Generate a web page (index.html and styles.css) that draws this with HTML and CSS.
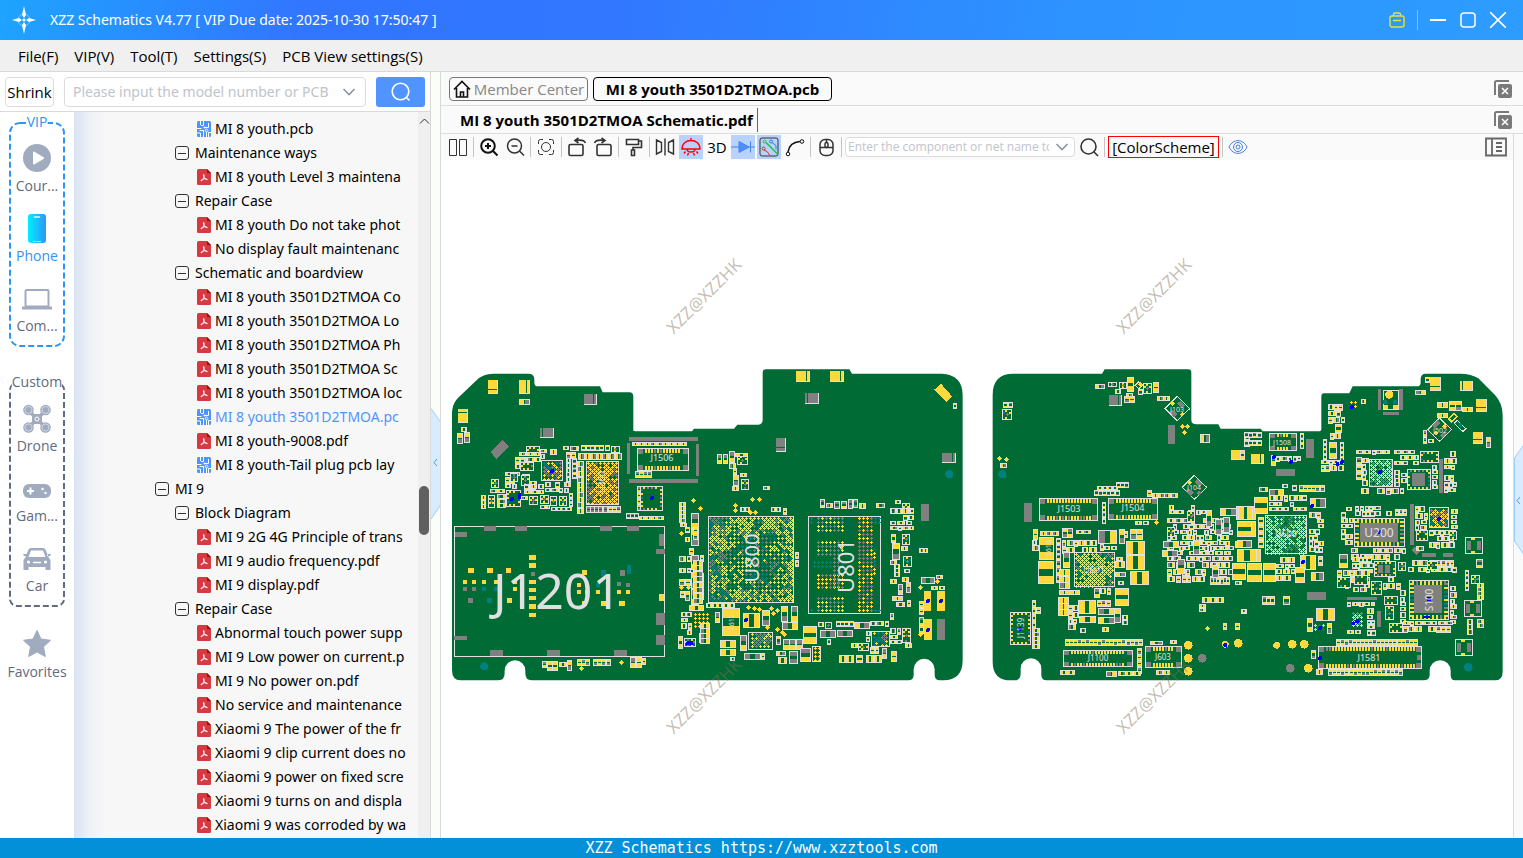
FILE: index.html
```
<!DOCTYPE html>
<html lang="en">
<head>
  <meta charset="UTF-8">
  <meta name="viewport" content="width=device-width, initial-scale=1.0">
  <title>XZZ Schematics V4.77</title>
  <link rel="stylesheet" href="styles.css">
</head>
<body>
<svg class="symbols" aria-hidden="true">
  <symbol id="pdf" viewBox="0 0 14 16">
    <path d="M1.500 0H10l4 4v10.500a1.500 1.500 0 0 1-1.500 1.500h-11A1.500 1.500 0 0 1 0 14.500v-13A1.500 1.500 0 0 1 1.500 0z" fill="#d33a42"/>
    <path d="M10 0l4 4h-3a1 1 0 0 1-1-1z" fill="#8e1218"/>
    <path d="M6.600 5.500c.8 0 .6 1.500.4 2.700C6.600 9.800 4.800 12.300 4 12c-.7-.6 1.500-2 3.300-2.200 1.300-.2 3 0 3 .6 0 .7-1.500.2-2.600-.8C6.900 8.500 6.100 6.500 6.600 5.500z" fill="none" stroke="#fff" stroke-width=".9"/>
  </symbol>
  <symbol id="pcb" viewBox="0 0 14 16">
    <rect width="14" height="16" rx="1.500" fill="#4f93ff"/>
    <path d="M3.500 0v4M6.500 0v4.500H4M11.500 2v4.500H8M0 7.500h4.500M6.500 16V9.500H2.500M3.500 16v-4H0M9.500 16v-5M11.500 16v-4.500H14" fill="none" stroke="#fff"/>
    <circle cx="7.500" cy="6.500" r="1" fill="#fff"/>
    <circle cx="9.500" cy="9.500" r="1.400" fill="none" stroke="#fff"/>
  </symbol>
  <symbol id="chevron" viewBox="0 0 14 10">
    <path d="M1.500 2L7 7.500 12.500 2" fill="none" stroke="#8e949e" stroke-width="1.600"/>
  </symbol>
  <symbol id="close-all" viewBox="0 0 18 18">
    <path d="M1 15V2.500A1.500 1.500 0 0 1 2.500 1H15" fill="none" stroke="#7a7a7a" stroke-width="2"/>
    <rect x="4" y="4" width="14" height="14" rx="2" fill="#7a7a7a"/>
    <path d="M8 8l6 6M14 8l-6 6" stroke="#fff" stroke-width="1.600"/>
  </symbol>
</svg>

<header class="titlebar">
  <svg class="logo" width="24" height="30" viewBox="0 0 24 30">
    <circle cx="12" cy="15" r="6" fill="none" stroke="#7cc4ff"/>
    <path d="M12 1l2 9-2 3-2-3zM12 29l2-9-2-3-2 3zM0 15l7-2 3 2-3 2zM24 15l-7-2-3 2 3 2z" fill="#fff"/>
    <circle cx="12" cy="15" r="1.500" fill="#fff"/>
  </svg>
  <span class="title">XZZ Schematics V4.77 [ VIP Due date: 2025-10-30 17:50:47 ]</span>
  <div class="window-buttons">
    <button aria-label="Toolbox"><svg width="16" height="16" viewBox="0 0 16 16" fill="none" stroke="#e3e23c" stroke-width="1.400"><rect x="1" y="4" width="14" height="11" rx="2"/><path d="M4.500 4V2.500a1.500 1.500 0 0 1 1.500-1.500h4a1.500 1.500 0 0 1 1.500 1.500V4M4 8.500h8"/></svg></button>
    <span class="divider"></span>
    <button aria-label="Minimize"><svg width="16" height="16" viewBox="0 0 16 16"><path d="M0 8h16" stroke="#fff" stroke-width="2"/></svg></button>
    <button aria-label="Maximize"><svg width="16" height="16" viewBox="0 0 16 16"><rect x="1" y="1" width="14" height="14" rx="3" fill="none" stroke="#fff" stroke-width="1.500"/></svg></button>
    <button aria-label="Close"><svg width="16" height="16" viewBox="0 0 16 16"><path d="M0 0l16 16M16 0L0 16" stroke="#fff" stroke-width="1.600"/></svg></button>
  </div>
</header>

<nav class="menubar">
  <button>File(F)</button>
  <button>VIP(V)</button>
  <button>Tool(T)</button>
  <button>Settings(S)</button>
  <button>PCB View settings(S)</button>
</nav>

<main class="main">
  <section class="left">
    <form class="search">
      <button type="button" class="shrink">Shrink</button>
      <div class="combo">
        <input type="text" aria-label="Model number" placeholder="Please input the model number or PCB">
        <svg width="14" height="10"><use href="#chevron"/></svg>
      </div>
      <button type="button" class="go" aria-label="Search"><svg width="20" height="20" viewBox="0 0 20 20" fill="none" stroke="#fff" stroke-width="1.600"><circle cx="9.500" cy="9.500" r="8.300"/><path d="M15.500 15.500l3 3"/></svg></button>
    </form>
    <div class="left-body">
      <aside class="sidebar">
        <div class="group vip">
          <svg class="frame"><rect x="1" y="1" rx="10"/></svg>
          <span class="group-name">VIP</span>
          <a href="#" class="item">
            <svg width="30" height="30" viewBox="0 0 30 30"><circle cx="15" cy="15" r="14" fill="#a1abc0"/><path d="M11 9.500v11a1 1 0 0 0 1.500.8l9-5.300a1 1 0 0 0 0-1.800l-9-5.500a1 1 0 0 0-1.500.8z" fill="#fff"/></svg>
            Cour...
          </a>
          <a href="#" class="item on">
            <svg width="30" height="30" viewBox="0 0 30 30"><defs><linearGradient id="ph"><stop offset="0" stop-color="#00f0ff"/><stop offset="1" stop-color="#2f94f8"/></linearGradient></defs><rect x="6" y="1" width="18" height="29" rx="3" fill="url(#ph)"/><path d="M12.500 4h5" stroke="#dff6ff" stroke-width="1.500" stroke-linecap="round"/><path d="M11 28.500h8" stroke="#9fdcff"/></svg>
            Phone
          </a>
          <a href="#" class="item">
            <svg width="30" height="30" viewBox="0 0 30 30" fill="none" stroke="#a1abc0"><rect x="3.500" y="7" width="23" height="16.500" rx="1" stroke-width="2"/><path d="M0 25h30" stroke-width="3"/></svg>
            Com...
          </a>
        </div>
        <div class="group custom">
          <svg class="frame"><rect x="1" y="1" rx="7"/></svg>
          <span class="group-name">Custom</span>
          <a href="#" class="item">
            <svg width="30" height="30" viewBox="0 0 30 30"><path d="M6 7l18 18M24 7L6 25" stroke="#a1abc0" stroke-width="3.500"/><g fill="#a1abc0"><circle cx="6.500" cy="7" r="5.300"/><circle cx="23.500" cy="7" r="5.300"/><circle cx="6.500" cy="24.500" r="5.300"/><circle cx="23.500" cy="24.500" r="5.300"/><rect x="10" y="11" width="10" height="10" rx="3"/></g><g fill="none" stroke="#fff" stroke-width=".5"><circle cx="6.500" cy="7" r="3.600"/><circle cx="23.500" cy="7" r="3.600"/><circle cx="6.500" cy="24.500" r="3.600"/><circle cx="23.500" cy="24.500" r="3.600"/><circle cx="15" cy="16" r="2" stroke-width="1"/></g></svg>
            Drone
          </a>
          <a href="#" class="item">
            <svg width="30" height="30" viewBox="0 0 30 30"><rect x="1" y="11" width="28" height="14" rx="6" fill="#a1abc0"/><path d="M5 18h7M8.500 14.500v7" stroke="#fff" stroke-width="2"/><circle cx="20.500" cy="16" r="1.200" fill="#fff"/><circle cx="23.500" cy="20" r="1.200" fill="#fff"/></svg>
            Gam...
          </a>
          <a href="#" class="item">
            <svg width="30" height="30" viewBox="0 0 30 30"><path d="M3 15l3.500-8.500A3 3 0 0 1 9 5h12a3 3 0 0 1 2.500 1.500L27 15l1.500 2v10h-5v-3h-17v3h-5V17zM1 11h4v2H2zM29 11h-4v2h3z" fill="#a1abc0"/><path d="M6.500 14L9 7.500h12l2.500 6.500z" fill="#fff"/><circle cx="6.500" cy="19" r="1.600" fill="#fff"/><circle cx="23.500" cy="19" r="1.600" fill="#fff"/><path d="M11 19.500h8" stroke="#fff" stroke-width="1.500"/></svg>
            Car
          </a>
        </div>
        <a href="#" class="item favorites">
          <svg width="30" height="30" viewBox="0 0 30 30"><path d="M15 1.500l4 8.500 9.500 1.300-7 6.500 1.800 9.700L15 23l-8.300 4.500 1.800-9.700-7-6.500L11 10z" fill="#a1abc0" stroke="#a1abc0" stroke-linejoin="round"/></svg>
          Favorites
        </a>
      </aside>
      <ul class="tree">
        <li class="file"><a href="#"><svg><use href="#pcb"/></svg>MI 8 youth.pcb</a></li>
        <li class="folder"><button aria-label="Collapse"></button>Maintenance ways</li>
        <li class="file"><a href="#"><svg><use href="#pdf"/></svg>MI 8 youth Level 3 maintena</a></li>
        <li class="folder"><button aria-label="Collapse"></button>Repair Case</li>
        <li class="file"><a href="#"><svg><use href="#pdf"/></svg>MI 8 youth Do not take phot</a></li>
        <li class="file"><a href="#"><svg><use href="#pdf"/></svg>No display fault maintenanc</a></li>
        <li class="folder"><button aria-label="Collapse"></button>Schematic and boardview</li>
        <li class="file"><a href="#"><svg><use href="#pdf"/></svg>MI 8 youth 3501D2TMOA Co</a></li>
        <li class="file"><a href="#"><svg><use href="#pdf"/></svg>MI 8 youth 3501D2TMOA Lo</a></li>
        <li class="file"><a href="#"><svg><use href="#pdf"/></svg>MI 8 youth 3501D2TMOA Ph</a></li>
        <li class="file"><a href="#"><svg><use href="#pdf"/></svg>MI 8 youth 3501D2TMOA Sc</a></li>
        <li class="file"><a href="#"><svg><use href="#pdf"/></svg>MI 8 youth 3501D2TMOA loc</a></li>
        <li class="file current"><a href="#"><svg><use href="#pcb"/></svg>MI 8 youth 3501D2TMOA.pc</a></li>
        <li class="file"><a href="#"><svg><use href="#pdf"/></svg>MI 8 youth-9008.pdf</a></li>
        <li class="file"><a href="#"><svg><use href="#pcb"/></svg>MI 8 youth-Tail plug pcb lay</a></li>
        <li class="model"><button aria-label="Collapse"></button>MI 9</li>
        <li class="folder"><button aria-label="Collapse"></button>Block Diagram</li>
        <li class="file"><a href="#"><svg><use href="#pdf"/></svg>MI 9 2G 4G Principle of trans</a></li>
        <li class="file"><a href="#"><svg><use href="#pdf"/></svg>MI 9 audio frequency.pdf</a></li>
        <li class="file"><a href="#"><svg><use href="#pdf"/></svg>MI 9 display.pdf</a></li>
        <li class="folder"><button aria-label="Collapse"></button>Repair Case</li>
        <li class="file"><a href="#"><svg><use href="#pdf"/></svg>Abnormal touch power supp</a></li>
        <li class="file"><a href="#"><svg><use href="#pdf"/></svg>MI 9 Low power on current.p</a></li>
        <li class="file"><a href="#"><svg><use href="#pdf"/></svg>MI 9 No power on.pdf</a></li>
        <li class="file"><a href="#"><svg><use href="#pdf"/></svg>No service and maintenance</a></li>
        <li class="file"><a href="#"><svg><use href="#pdf"/></svg>Xiaomi 9 The power of the fr</a></li>
        <li class="file"><a href="#"><svg><use href="#pdf"/></svg>Xiaomi 9 clip current does no</a></li>
        <li class="file"><a href="#"><svg><use href="#pdf"/></svg>Xiaomi 9 power on fixed scre</a></li>
        <li class="file"><a href="#"><svg><use href="#pdf"/></svg>Xiaomi 9 turns on and displa</a></li>
        <li class="file"><a href="#"><svg><use href="#pdf"/></svg>Xiaomi 9 was corroded by wa</a></li>
      </ul>
      <div class="scrollbar">
        <svg width="12" height="18" viewBox="0 0 12 18"><path d="M2 11.500l4.500-4.500 4.500 4.500" fill="none" stroke="#333"/></svg>
        <span class="thumb"></span>
      </div>
    </div>
  </section>

  <div class="splitter">
    <svg width="10" height="112" viewBox="0 0 10 112"><path d="M0 .5L9.500 14v83L0 111" fill="#d8ebff" stroke="#9bd0fb"/><path d="M6 51l-3 3.500 3 3.500" fill="none" stroke="#4d9ae8"/></svg>
  </div>

  <section class="right">
    <div class="tabs">
      <button class="tab member"><svg width="18" height="18" viewBox="0 0 18 18" fill="none" stroke="#111" stroke-width="1.600"><path d="M1 9.500L9 1.500l8 8M3.500 8v9h11V8M7.500 17v-5h3v5"/></svg>Member Center</button>
      <button class="tab active">MI 8 youth 3501D2TMOA.pcb</button>
      <button class="close-all" aria-label="Close all"><svg width="18" height="18"><use href="#close-all"/></svg></button>
    </div>
    <div class="tabs docs">
      <button class="doc">MI 8 youth 3501D2TMOA Schematic.pdf</button>
      <button class="close-all" aria-label="Close all"><svg width="18" height="18"><use href="#close-all"/></svg></button>
    </div>
    <div class="work">
      <div class="view">
        <div class="toolbar">
          <button aria-label="Split"><svg viewBox="0 0 20 20"><path d="M1.500 2.500h7v16h-7zM11.500 2.500h7v16h-7z"/></svg></button>
          <span class="sep"></span>
          <button aria-label="Zoom in"><svg viewBox="0 0 20 20" stroke="#111" stroke-width="2"><circle cx="9" cy="9" r="6.800"/><path d="M14 14l4.500 4.500M6 9h6M9 6v6"/></svg></button>
          <button aria-label="Zoom out"><svg viewBox="0 0 20 20" stroke-width="1.500"><circle cx="9.500" cy="9" r="7"/><path d="M14.500 14l4.500 4.500M6.500 9h6"/></svg></button>
          <span class="sep"></span>
          <button aria-label="Fit"><svg viewBox="0 0 20 20"><path d="M2.500 7V4.500a2 2 0 0 1 2-2H7M13 2.500h2.500a2 2 0 0 1 2 2V7M17.500 13v2.500a2 2 0 0 1-2 2H13M7 17.500H4.500a2 2 0 0 1-2-2V13"/><circle cx="10" cy="10" r="4.500"/></svg></button>
          <span class="sep"></span>
          <button aria-label="Rotate left"><svg viewBox="0 0 20 20" stroke-width="1.600"><rect x="2" y="7.500" width="14" height="11" rx="1.500"/><path d="M18.500 6c-1-2.500-4-3.500-10-2.500M11.500 1L8 3.500 11.500 6"/></svg></button>
          <button aria-label="Rotate right"><svg viewBox="0 0 20 20" stroke-width="1.600"><rect x="4" y="7.500" width="14" height="11" rx="1.500"/><path d="M1.500 6c1-2.500 4-3.500 10-2.500M8.500 1L12 3.500 8.500 6"/></svg></button>
          <span class="sep"></span>
          <button aria-label="Format"><svg viewBox="0 0 20 20" stroke-width="1.600"><path d="M2.500 2.500h12v5h-12zM14.500 4h3v6.500H9v2.500M7.500 13h3v5.500h-3z"/></svg></button>
          <span class="sep"></span>
          <button aria-label="Mirror"><svg viewBox="0 0 20 20" stroke-width="1.400"><path d="M1.500 3l5 2.500v9L1.500 17zM18.500 3l-5 2.500v9l5 2.500zM10 1.500v17"/></svg></button>
          <button class="on" aria-label="Light"><svg viewBox="0 0 20 20" stroke="#f00" stroke-width="1.400"><path d="M1 12C1 6.500 5 3.500 10 3.500s9 3 9 8.500zM10 1v2.500M6 12c0 4 8 4 8 0M4.500 14.500L3 16.500M15.500 14.500l1.500 2M7.500 16L6.500 18.500M12.500 16l1 2.500"/></svg></button>
          <button class="text">3D</button>
          <button class="on" aria-label="Diode"><svg class="wide" viewBox="0 0 24 20" stroke="#4385f5"><path d="M0 10h24M19.500 4.500v11"/><path d="M8 4.500v11l10-5.500z" fill="#4a90ff"/></svg></button>
          <button class="on" aria-label="Net lines"><svg viewBox="0 0 20 20"><rect x="1" y="1" width="18" height="18" rx="2" stroke="#333"/><path d="M7 5.500L19 17.500" stroke="#1fc43c" stroke-width="1.600"/><circle cx="5.500" cy="4.500" r="1.500" stroke="#1fc43c"/><path d="M13 5.500l4 3v4" stroke="#2f7de8"/><circle cx="12" cy="4.500" r="1.500" stroke="#2f7de8"/><path d="M5 13l3 1.500 3 4" stroke="#e22"/><circle cx="4.500" cy="11.500" r="1.500" stroke="#e22"/></svg></button>
          <button aria-label="Curve"><svg viewBox="0 0 20 20" stroke="#111"><path d="M3 15C4 8 8 5 15 4.500" stroke-width="1.600"/><circle cx="3" cy="17" r="1.800"/><circle cx="17" cy="4.500" r="1.800"/></svg></button>
          <span class="sep"></span>
          <button aria-label="Mouse"><svg viewBox="0 0 20 20" stroke-width="1.500"><rect x="4" y="2.500" width="13" height="16" rx="5"/><path d="M4 10.500h13M10.500 2.500v3"/><rect x="9" y="5.500" width="3" height="5" rx="1.500"/></svg></button>
          <span class="sep"></span>
          <div class="combo small">
            <input type="text" aria-label="Component or net name" placeholder="Enter the component or net name to search">
            <svg width="14" height="10"><use href="#chevron"/></svg>
          </div>
          <button aria-label="Find"><svg viewBox="0 0 20 20" stroke-width="1.600"><circle cx="9.500" cy="9.500" r="7.500"/><path d="M15 15l4 4"/></svg></button>
          <span class="sep"></span>
          <button class="scheme">[ColorScheme]</button>
          <span class="sep"></span>
          <button aria-label="Show"><svg viewBox="0 0 20 20" stroke="#3f7fe0"><path d="M1 10c4-8.500 14-8.500 18 0-4 8.500-14 8.500-18 0z"/><circle cx="10" cy="10" r="4.500"/><circle cx="10" cy="10" r="2"/></svg></button>
          <button class="panel" aria-label="Panel"><svg class="wide" viewBox="0 0 24 20" stroke="#666" stroke-width="1.800"><path d="M2 1.500h20v17H2zM8 1.500v17M12 6h6M12 10h6M12 14h6"/></svg></button>
        </div>
        <svg id="board" class="board" viewBox="441 160 1072 678" preserveAspectRatio="xMidYMid slice"></svg>
      </div>
      <div class="edge">
        <svg width="10" height="112" viewBox="0 0 10 112"><path d="M10 .5L.5 14v83L10 111" fill="#d8ebff" stroke="#9bd0fb"/><path d="M6 53l-3 3.500 3 3.500" fill="none" stroke="#4d9ae8"/></svg>
      </div>
    </div>
  </section>
</main>

<footer class="footer">XZZ Schematics https://www.xzztools.com</footer>
<script src="board.js"></script>
</body>
</html>
```
FILE: styles.css
```
* {
  box-sizing: border-box;
}
html, body {
  margin: 0;
  height: 100%;
}
body {
  display: flex;
  flex-direction: column;
  overflow: hidden;
  font-family: "Open Sans", "Noto Sans", sans-serif;
  font-size: 15px;
  line-height: 20px;
  color: #000;
  background: #fff;
}
button, input {
  font: inherit;
  color: inherit;
}
button {
  padding: 0;
  border: none;
  background: none;
  white-space: nowrap;
}
a {
  color: inherit;
  text-decoration: none;
}
svg {
  flex: none;
}
.symbols {
  position: absolute;
  width: 0;
  height: 0;
}

/* title and menu */
.titlebar {
  display: flex;
  align-items: center;
  height: 40px;
  flex: none;
  padding: 0 17px 0 12px;
  color: #fff;
  background: linear-gradient(100deg, #1ea4ff 0, #3275ff 20%, #3177ff 40%, #2d93ff 70%, #2d9cff);
}
.title, .tree, .search input {
  font-family: "Noto Sans", sans-serif;
  font-size: 14px;
}
.logo {
  margin-right: 14px;
}
.window-buttons {
  display: flex;
  align-items: center;
  gap: 14px;
  margin-left: auto;
}
.window-buttons svg {
  display: block;
}
.divider {
  width: 1px;
  height: 20px;
  margin: 0 -2px;
  background: #7fc0ff;
}
.menubar {
  display: flex;
  gap: 16px;
  height: 32px;
  flex: none;
  padding: 0 18px;
  background: #f0f0f0;
  border-bottom: 1px solid #d9d9d9;
}
.main {
  display: flex;
  flex: 1;
  min-height: 0;
}

/* left side */
.left {
  display: flex;
  flex-direction: column;
  width: 431px;
  flex: none;
  border-right: 1px solid #d9d9d9;
}
.search {
  display: flex;
  align-items: center;
  gap: 10px;
  height: 40px;
  flex: none;
  padding: 0 5px;
  border-bottom: 1px solid #d9d9d9;
}
.shrink {
  width: 49px;
  height: 30px;
  border: 1px solid #dcdcdc;
  border-radius: 4px;
}
.combo {
  display: flex;
  align-items: center;
  flex: 1;
  min-width: 0;
  height: 30px;
  padding: 0 9px 0 8px;
  border: 1px solid #dcdcdc;
  border-radius: 4px;
  background: #fff;
}
.combo input {
  flex: 1;
  min-width: 0;
  padding: 0;
  border: none;
  outline: none;
  background: none;
  margin-right: 6px;
}
.combo input::placeholder {
  color: #c0c4cc;
}
.go {
  display: flex;
  align-items: center;
  justify-content: center;
  width: 49px;
  height: 30px;
  border-radius: 3px;
  background: #5294ff;
}
.left-body {
  display: flex;
  flex: 1;
  min-height: 0;
}
.sidebar {
  width: 74px;
  flex: none;
  padding: 10px 9px 0;
  font-size: 14px;
  color: #5f6b7f;
}
.group {
  position: relative;
  display: flex;
  flex-direction: column;
  gap: 17px;
  height: 225px;
  padding-top: 21px;
  margin-bottom: 35px;
}
.custom {
  margin-bottom: 22px;
}
.frame {
  position: absolute;
  top: 0;
  left: 0;
  width: 100%;
  height: 100%;
}
.frame rect {
  width: calc(100% - 2px);
  height: calc(100% - 2px);
  fill: none;
  stroke: #5f6b7f;
  stroke-width: 2;
  stroke-dasharray: 6 3;
}
.vip .frame rect {
  stroke: #2f94f8;
}
.group-name {
  position: absolute;
  top: -10px;
  left: 50%;
  transform: translateX(-50%);
  background: #fff;
}
.vip .group-name, .item.on {
  color: #2f94f8;
}
.item {
  display: flex;
  flex-direction: column;
  align-items: center;
  gap: 3px;
}
.tree {
  flex: 1;
  min-width: 0;
  margin: 0;
  padding: 5px 8px 0 0;
  overflow: hidden;
  list-style: none;
  background: linear-gradient(90deg, #d9e3f2, #eef1f6 16px, #f7f7f7 32px);
}
.tree li {
  display: flex;
  align-items: center;
  height: 24px;
  white-space: nowrap;
}
.tree .file {
  padding-left: 123px;
}
.tree .folder {
  padding-left: 101px;
}
.tree .model {
  padding-left: 81px;
}
.tree a {
  display: flex;
  align-items: center;
}
.tree .current {
  color: #5294ff;
}
.tree svg {
  width: 14px;
  height: 16px;
  margin-right: 4px;
}
.tree button {
  width: 14px;
  height: 14px;
  margin-right: 6px;
  border: 1px solid #333;
  border-radius: 3px;
}
.tree button::after {
  content: "";
  display: block;
  height: 1px;
  margin: 0 2px;
  background: #333;
}
.scrollbar {
  width: 12px;
  flex: none;
  background: #efefef;
}
.scrollbar svg {
  display: block;
}
.thumb {
  display: block;
  width: 10px;
  height: 49px;
  margin: 356px 1px 0;
  border-radius: 5px;
  background: #606060;
}
.splitter {
  display: flex;
  align-items: center;
  width: 9px;
  flex: none;
  padding-top: 18px;
  background: #fbfdf9;
}

/* right side */
.right {
  display: flex;
  flex-direction: column;
  flex: 1;
  min-width: 0;
  border-left: 1px solid #d9d9d9;
}
.tabs {
  display: flex;
  align-items: center;
  gap: 5px;
  height: 34px;
  flex: none;
  padding: 0 11px 0 8px;
  background: #fafafa;
  border-bottom: 1px solid #dcdcdc;
}
.docs {
  height: 28px;
}
.tab {
  display: flex;
  align-items: center;
  justify-content: center;
  gap: 3px;
  width: 139px;
  height: 24px;
  border: 1px solid #777;
  border-radius: 4px;
  color: #888;
}
.tab.active {
  width: 239px;
  border-color: #000;
  color: #000;
  font-weight: bold;
}
.doc {
  width: 309px;
  height: 24px;
  padding-left: 11px;
  border-right: 1px solid #666;
  text-align: left;
  font-weight: bold;
}
.close-all {
  margin-left: auto;
}
.close-all svg {
  display: block;
}
.work {
  display: flex;
  flex: 1;
  min-height: 0;
}
.view {
  display: flex;
  flex-direction: column;
  flex: 1;
  min-width: 0;
}
.toolbar {
  display: flex;
  align-items: center;
  gap: 2px;
  height: 26px;
  flex: none;
  padding: 0 5px;
  background: #fafafa;
}
.toolbar button {
  display: flex;
  align-items: center;
  justify-content: center;
  width: 24px;
  height: 24px;
  flex: none;
}
.toolbar button svg {
  width: 20px;
  height: 20px;
  fill: none;
}
.toolbar button svg:not([stroke]) {
  stroke: #333;
}
.toolbar button .wide {
  width: 24px;
}
.toolbar .on {
  background: #b8d2fc;
}
.sep {
  width: 1px;
  height: 20px;
  margin: 0 1px;
  background: #c4c4c4;
}
.toolbar .scheme {
  width: 111px;
  height: 22px;
  border: 1px solid #f00;
}
.toolbar .panel {
  margin-left: auto;
}
.small {
  flex: none;
  width: 230px;
  height: 20px;
  padding: 0 5px 0 2px;
  font-size: 12px;
}
.board {
  display: block;
  flex: 1;
  min-height: 0;
  width: 100%;
  font-family: "Noto Sans", sans-serif;
}
.board .mark {
  font-size: 17px;
  fill: #80705a;
  fill-opacity: .45;
}
.edge {
  display: flex;
  align-items: center;
  width: 10px;
  flex: none;
  padding-top: 28px;
  background: #fafafa;
  border-left: 1px solid #dcdcdc;
}
.footer {
  height: 20px;
  flex: none;
  text-align: center;
  font-family: "DejaVu Sans Mono", monospace;
  font-size: 15px;
  color: #fff;
  background: #0390d8;
}
```
FILE: board.js
```
// Board drawing. Part coordinates are in board units, three to a pixel.
const colors = { y: '#ffd83d', g: '#808080', t: '#008080', w: '#e0e0e0', b: '#0000ff', n: '#006b35' };
let out = [];
let ox = 0, oy = 0;
let seed = 7;

function rnd() {
  seed = (seed * 16807) % 2147483647;
  return seed / 2147483647;
}
const pick = s => s[Math.floor(rnd() * s.length)];
const u = v => Math.round(v / 3);

function px(x, y, w, h, c) {
  out.push(`<rect x="${x}" y="${y}" width="${w}" height="${h}" fill="${colors[c]}"/>`);
}
function rect(x, y, w, h, c) {
  px(ox + u(x), oy + u(y), u(w), u(h), c);
}
function box(x, y, w, h) {
  out.push(`<rect x="${ox + u(x) + .5}" y="${oy + u(y) + .5}" width="${u(w) - 1}" height="${u(h) - 1}" fill="none" stroke="#e0e0e0"/>`);
}

// two-pad part with an outline
function cap(x, y, w, h, cc) {
  if (!cc) cc = pick(['yy', 'yy', 'yg', 'gy', 'yy']);
  const X = ox + u(x), Y = oy + u(y), W = Math.max(u(w), 4), H = Math.max(u(h), 4);
  px(X, Y, W, H, 'w');
  px(X + 1, Y + 1, W - 2, H - 2, 'n');
  const big = Math.max(W, H) > 10;
  if (W >= H) {
    const p = big ? Math.round(W * .32) : Math.max(1, Math.floor((W - 2) * .4));
    px(X + 1, Y + 1, p, H - 2, cc[0]);
    px(X + W - 1 - p, Y + 1, p, H - 2, cc[1]);
  } else {
    const p = big ? Math.round(H * .32) : Math.max(1, Math.floor((H - 2) * .4));
    px(X + 1, Y + 1, W - 2, p, cc[0]);
    px(X + 1, Y + H - 1 - p, W - 2, p, cc[1]);
  }
}

function strip(x, y, w, h, n, cc) {
  for (let i = 0; i < n; i++) {
    if (w > h) cap(x + i * w / n, y, w / n + 2, h, cc);
    else cap(x, y + i * h / n, w, h / n + 2, cc);
  }
}

// dense field of small parts
function field(x, y, w, h) {
  for (let j = y; j + 12 <= y + h; ) {
    const rh = pick([15, 18, 21]);
    for (let i = x; i + 12 <= x + w; ) {
      const cw = pick([12, 15, 18, 21, 24]);
      if (rnd() > .14) cap(i, j, Math.min(cw, x + w - i), rh - (cw > 16 ? 3 : 0));
      i += cw + pick([0, 0, 3]);
    }
    j += rh;
  }
}

function plus(X, Y, c) {
  px(X - 1, Y, 3, 1, c);
  px(X, Y - 1, 1, 3, c);
}
function grid(x, y, w, h, cs) {
  const X = ox + u(x), Y = oy + u(y), W = u(w), H = u(h);
  const large = W > 60;
  const wide = cs.length > 2;
  for (let j = 2; j < H; j += 4) for (let i = 2; i < W; i += 4) {
    const edge = Math.min(i, j, W - i, H - j) < 16;
    // ground and spare nets run in patches, the rest is signal
    const patch = wide && Math.sin((X + i) / 7) + Math.cos((Y + j) / 6 + i / 11) > (large && !edge ? -.2 : .8);
    const set = patch ? (cs.includes('t') ? 'gggtty' : 'ggy') : cs;
    plus(X + i, Y + j, pick(set));
    if (wide && i + 3 < W && j + 3 < H && rnd() < (large && !edge ? .2 : .85)) plus(X + i + 2, Y + j + 2, pick(set));
  }
}

// ic with pads round the edge
function chip(x, y, w, h) {
  rect(x, y, w, h, 'n');
  box(x, y, w, h);
  const X = ox + u(x), Y = oy + u(y), W = u(w), H = u(h);
  const l = W > 30 ? 4 : 2;
  for (let i = 3; i < W - 4; i += 4) {
    px(X + i, Y + 1, 2, l, pick('yyyyg'));
    px(X + i, Y + H - 1 - l, 2, l, pick('yyyyg'));
  }
  for (let j = 3; j < H - 4; j += 4) {
    px(X + 1, Y + j, l, 2, pick('yyyyt'));
    px(X + W - 1 - l, Y + j, l, 2, pick('yyygt'));
  }
  if (W < 12) plus(X + (W >> 1), Y + (H >> 1), 'g');
}

// four-corner part: grey bars at the sides, pads at top and bottom
function shield(x, y, w, h) {
  box(x, y, w, h);
  rect(x + 6, y + 12, 12, h - 24, 'g');
  rect(x + w - 18, y + 12, 12, h - 24, 'g');
  rect(x + 18, y + 3, 12, 6, 'y');
  rect(x + 18, y + h - 9, 12, 6, 'y');
}

// board connector, pads in two rows
function conn(x, y, w, h) {
  box(x, y, w, h);
  const X = ox + u(x), Y = oy + u(y), W = u(w), H = u(h), k = Math.min(5, H >> 2);
  for (const a of [X + 1, X + W - 6]) {
    px(a, Y + 1, 5, k, 'g');
    px(a, Y + H - 1 - k, 5, k, 'g');
  }
  for (let i = 8; i < W - 8; i += 3) {
    px(X + i, Y + 1, 2, k - 1, pick('yyyyyg'));
    px(X + i, Y + H - k, 2, k - 1, pick('yyyyyg'));
  }
}

// large pad with a slot on one side
function pad(x, y, w, h, c, side) {
  rect(x, y, w, h, 'w');
  rect(x, y, w - 3, h - 3, c);
  if (side === 'l') rect(x + 6, y, 3, h - 3, 'n');
  if (side === 'r') rect(x + w - 12, y, 3, h - 3, 'n');
  if (side === 't') rect(x, y + 9, w - 3, 3, 'n');
  if (side === 'b') rect(x, y + h - 15, w - 3, 3, 'n');
}
function dot(x, y, r, c) {
  out.push(`<circle cx="${ox + x / 3}" cy="${oy + y / 3}" r="${r / 3}" fill="${colors[c]}"/>`);
}
function poly(pts, c) {
  const p = pts.split(',').map((v, i) => (i % 2 ? oy : ox) + v / 3).join(' ');
  out.push(c === 'w' ? `<polygon points="${p}" fill="none" stroke="#e0e0e0"/>` : `<polygon points="${p}" fill="${colors[c]}"/>`);
}
function via(x, y) {
  const X = ox + u(x), Y = oy + u(y);
  px(X - 2, Y, 5, 1, 'y');
  px(X - 1, Y - 1, 3, 3, 'y');
  px(X, Y - 2, 1, 5, 'y');
}
function label(x, y, size, text, turn) {
  const X = ox + u(x), Y = oy + u(y);
  out.push(`<text x="${X}" y="${Y}" dy="${Math.round(size * .36)}" font-size="${size}" text-anchor="middle" fill="#e0e0e0"${turn ? ` transform="rotate(${turn} ${X} ${Y})"` : ''}>${text}</text>`);
}

function draw(x0, y0, list) {
  ox = x0;
  oy = y0;
  list.split(/[;\n]+/).forEach(line => {
    const a = line.trim().split(/\s+/);
    const k = a.shift();
    if (!k) return;
    if (k === 'z') return poly(a[1], a[0]);
    const v = a.map(s => (isNaN(s) ? s : +s));
    ({ c: cap, s: strip, k: field, g: grid, m: chip, n: conn, q: pad, o: dot, r: rect, b: box, d: via, h: shield })[k](...v);
  });
}

out.push('<g transform="translate(440 360) scale(.33333)" fill="#006b35"><path d="M36 165C36 135 45 122 60 108L108 62Q128 41 160 41H265Q283 41 283 58V68Q283 79 294 79H480L488 97H568Q580 97 580 110V212L586 214H756L762 206H882L892 194H955Q968 192 968 180V38Q968 28 978 28H1228L1236 41H1505Q1568 45 1568 105V900Q1568 961 1510 961H1500Q1484 961 1484 945V928A31 31 0 0 0 1421 928V945Q1421 961 1405 961H275Q256 961 256 940V932A31 31 0 0 0 194 932V940Q194 961 175 961H62Q36 961 36 930Z"/>');
out.push('<path transform="translate(1620)" d="M38 105Q38 41 100 41H366L374 28H625Q634 28 634 38V180Q634 193 650 193H715L722 206H842L848 214H1020L1024 210V110Q1024 100 1032 100H1108L1118 79H1310Q1322 79 1322 68V55Q1324 41 1336 41H1440Q1475 41 1495 55L1545 105Q1568 130 1568 165V935Q1568 961 1545 961H1425Q1412 961 1412 945V932A31 31 0 0 0 1349 932V945Q1349 961 1330 961H200Q184 961 184 945V926A31 31 0 0 0 122 926V940Q122 961 105 961H92Q38 961 38 905Z"/></g>');
out.push('<g shape-rendering="crispEdges">');

// left board, left half
draw(440, 360, `
q 144 60 30 42 y b; q 237 60 33 42 y r; c 237 116 33 18 yg; q 54 147 30 42 y t; c 63 201 18 15 yy; c 51 219 18 33 yg; c 72 216 18 33 yg
q 432 101 39 34 g r; q 300 204 42 30 g l; z g 151,276,187,239,208,259,170,297
m 258 258 42 30; k 237 276 66 30; k 225 290 50 46; m 240 306 42 28; k 195 335 50 50; k 245 342 54 52; k 300 268 22 36; k 330 268 42 30
m 210 340 24 28; m 242 345 26 32; c 369 258 18 12; c 390 258 28 14; s 423 256 68 18 5; c 495 255 14 18; m 512 258 26 20; k 378 276 34 18
s 378 294 16 72 5; s 396 294 14 60 4; s 414 280 128 20 7; s 412 303 20 155 10; g 437 303 98 130 yyyyyg; b 437 303 100 131
s 437 438 64 20 5 gg; s 504 438 38 20 3; k 315 366 78 40; k 252 372 60 32; m 153 357 24 28; s 150 387 42 12 2; s 123 405 14 42 3; m 144 405 22 40
s 171 402 26 42 3; m 197 390 44 52; k 243 408 26 40; m 268 408 26 28; m 300 405 26 28; m 330 408 22 30; m 357 408 24 30; s 387 400 12 40 3; k 285 436 45 20; s 333 441 60 12 4
g 306 303 62 58 yygt; b 303 300 66 62; o 336 333 6 b; o 216 417 6 b; r 233 398 10 18 b
r 567 231 207 12 g; r 567 357 207 12 g; r 561 249 9 93 g; r 768 252 9 96 g; s 576 246 162 12 9; n 591 264 155 68; s 585 333 48 20 4
m 600 378 68 74; s 591 378 12 70 4; o 636 414 6 b; s 558 460 35 18 3; s 597 468 72 12 4
b 42 498 632 392; r 132 498 36 14 g; r 225 498 36 14 g; r 480 498 36 14 g; r 561 498 36 14 g; r 45 516 36 14 g; r 657 522 16 36 g; r 648 567 26 14 g; r 657 702 16 21 y; r 648 759 26 36 g; r 648 825 26 30 g; r 42 828 39 12 g; r 150 870 39 18 g; r 321 870 39 18 g; r 522 870 39 18 g
r 267 585 21 15 y; r 267 609 21 15 y; r 273 636 12 12 g; r 267 660 21 12 y; r 267 684 21 12 y; r 267 708 21 12 y; r 267 733 21 14 y; r 267 759 21 12 y
r 84 624 18 14 y; r 141 624 18 14 y; r 198 624 15 14 y; r 69 660 12 12 y; r 96 660 12 12 y; r 126 660 12 12 y; r 162 660 12 12 y; r 219 660 12 12 y
r 69 681 12 12 g; r 96 681 12 12 g; r 126 681 12 12 t; r 162 681 12 12 t; r 219 681 12 12 y; r 84 714 15 14 g; r 141 714 15 14 t; r 201 714 15 14 y
r 426 630 15 14 y; r 483 630 15 18 t; r 540 630 15 18 g; r 561 615 12 27 t; r 411 669 12 12 y; r 435 669 12 12 y; r 468 669 12 12 t; r 498 669 12 12 t; r 531 667 12 12 g; r 558 669 12 12 g
r 411 690 12 12 y; r 435 690 12 12 y; r 468 690 12 12 y; r 498 690 12 12 y; r 531 690 12 12 y; r 558 690 12 12 y; r 426 724 15 14 y; r 483 724 15 14 y; r 537 724 18 14 y
c 306 903 14 20; c 320 903 18 30; c 336 903 18 30; c 357 906 24 16; c 381 900 16 32 yg; s 411 897 36 20 3; s 459 897 50 20 4; d 424 925; d 544 907; c 570 891 18 32; c 587 891 18 32; c 606 894 12 20; o 133 919 12 t
s 717 426 22 60 5; d 760 421; d 781 445; d 724 520; c 720 489 20 12; c 735 502 14 18 yy; c 753 459 24 48 gy; c 753 507 24 50 yg; k 717 530 32 45; c 747 564 14 20; k 717 588 36 60; c 753 585 24 46 gy; c 779 585 12 22
c 753 636 24 50 yg; c 753 687 24 48 gy; s 779 640 12 80 4; s 717 656 34 20 2; d 724 682; d 745 682; c 720 694 14 20; c 735 694 16 30; c 748 735 44 18; s 723 757 32 16 2; g 760 757 50 54 yy; k 723 775 34 55; c 777 820 16 30; c 795 820 14 28; c 714 828 16 38 yy; m 732 835 36 28; o 744 849 6 b; o 754 849 6 b
`);

// left board, right half
draw(700, 360, `
q 288 33 41 33 y r; q 390 33 42 33 y r; q 315 99 41 33 g l; z y 703,89,723,71,756,109,740,126; c 759 129 12 18 yy; q 228 234 30 42 g b; q 726 278 42 31 g r; o 748 343 12 t
c 51 282 14 30 gy; c 69 282 14 30 gy; c 87 273 18 36 gy; m 110 284 34 30; c 105 279 40 12; c 87 309 22 18; c 99 324 12 20; c 99 345 18 34 yg; c 120 339 20 12 yy; m 123 357 24 33; c 96 379 22 14 yy; c 189 378 21 12 gy
d 157 418; d 178 418; d 106 436; d 106 451; d 151 457; d 166 457; d 0 445; s 120 441 28 16 2; s 213 441 28 16 2 gy; c 249 444 12 22 yy
g 24 468 258 258 yyyyygt; b 24 468 258 260; b 324 468 219 294; g 348 468 84 44 yg; g 348 540 84 44 yg; g 336 600 96 24 tt; g 348 640 84 44 yg; g 348 708 84 50 yg; g 470 468 48 288 yg; g 516 562 12 90 yt; g 326 468 12 24 tt; g 520 468 20 24 tt; g 326 744 12 16 tt; g 520 744 20 16 tt; g 396 552 24 130 gg
c 285 577 12 20 yy; c 285 600 12 20 yy; c 360 418 14 28 gy; c 378 430 22 16; c 402 422 18 24 gg; c 424 422 18 24; c 443 418 14 30 gg; c 459 418 16 28 gg; c 477 430 22 18; c 528 430 26 16
c 585 420 18 12 yy; m 606 429 24 33; k 570 443 72 76; m 607 521 24 33; c 574 522 14 28; c 577 550 24 50 yg; c 603 558 20 14; m 610 588 26 33; s 582 612 18 38 3; c 570 600 20 16; c 612 627 18 12; c 570 656 20 14; c 606 651 20 14; c 594 671 14 34 gy; c 618 666 14 32 yg; c 576 708 32 14; c 588 726 28 14; c 621 720 12 20
s 657 564 24 16 2; r 663 431 24 52 g; c 663 651 42 20 gg; c 708 645 20 12; d 712 664; d 661 682; c 693 678 20 12 yy; c 717 678 18 12; r 671 693 22 60 y; r 711 693 24 60 y; r 671 777 25 63 y; r 711 777 24 63 g; o 684 723 6 b; o 723 723 6 b; o 684 810 6 b; s 657 723 14 40 2; d 661 823; s 657 771 14 50 2; c 570 759 12 20
s 18 730 86 14 5 yy; c 66 744 54 84 yy; c 45 757 14 32 gy; d 145 742; d 163 745; d 178 748; d 214 745; d 220 760; d 232 750; d 202 802; d 230 808; d 245 815; d 253 823; c 129 759 50 44 yy; o 138 780 6 b; c 186 750 24 48 yg
c 243 738 22 48 yg; c 273 738 22 48 gy; c 246 786 48 24 gy; c 309 798 42 54 yy; c 360 810 48 24 gg; c 411 810 48 22 gg; s 408 784 50 18 4; c 462 787 48 22 yg; c 354 787 18 14; m 375 785 20 20; g 150 816 66 50 yyg; b 144 816 74 54; c 60 840 48 24; c 60 867 48 20; c 120 825 20 48 gy; c 132 880 50 22 gg; c 183 880 12 20; c 90 890 16 12
s 0 790 30 58 4; c 228 828 16 26 yg; c 228 874 30 14 yg; c 234 890 26 20 yy; s 249 837 58 32 3 gy; c 267 873 26 38 gg; c 300 864 32 42 gy; g 338 858 24 46 yy; b 336 858 27 48; c 381 837 12 18; s 417 885 44 24 2 yy; c 468 885 22 24 yy; s 498 885 46 24 2 yy; c 546 864 16 32 gy; c 573 873 18 34 yy
k 510 783 62 18; g 516 813 52 46 tty; b 512 812 58 48; k 453 849 56 26; k 498 812 16 30; k 570 805 36 60; k 510 861 34 20; m 606 805 26 46; c 615 850 20 14; m 474 850 34 24
s -20 500 16 40 2; s -20 600 30 130 8
`);

// right board, left half
draw(980, 360, `
s 69 126 28 18 2; m 66 147 30 32; c 345 72 30 14; m 384 66 28 16; m 416 66 24 20; c 441 51 20 45; c 405 86 18 14; q 387 105 38 32 g r; s 432 108 30 22 2; c 438 99 20 12; m 488 70 28 32; c 519 66 18 32; c 474 88 14 18; s 531 108 36 16 2; z w 465,76,476,66,487,76,476,86; d 480 72
z w 555,146,592,109,629,146,592,182; z y 568,130,578,122,585,130,576,138; z g 592,130,602,122,616,137,606,147; z g 568,155,576,148,592,162,582,172; z y 600,162,608,156,614,163,606,170
z w 607,382,643,346,680,382,643,418; z g 643,366,653,357,668,372,658,382; z g 616,394,626,384,642,398,632,408; z y 620,368,628,361,636,368,628,376; z g 650,398,656,392,664,400,657,406
r 564 195 21 57 g; d 607 199; d 622 199; d 613 217; c 660 222 30 27 yg; q 753 270 42 30 y r; s 792 217 18 42 4; d 58 295; d 79 298; c 60 309 20 14; o 67 343 12 t
r 132 429 24 57 g; n 177 414 178 68; n 384 414 151 66; s 342 390 74 18 6; s 351 378 60 12 4; s 408 366 36 18 3; s 366 426 12 62 4; c 501 390 14 20; s 516 399 74 16 4; c 465 483 20 12; c 489 483 18 12; d 529 487
c 159 508 14 32; s 180 513 54 14 3; s 246 504 32 30 2; s 288 510 44 12 2; c 177 531 46 68 yy; c 174 603 48 68 yy; s 228 535 14 64 4; k 246 540 108 34; k 156 540 20 36; c 249 575 22 48 gy; c 354 510 56 42 gy; c 417 507 18 46; k 432 513 18 30; s 450 508 38 32 2
c 438 543 56 42 yy; c 438 585 56 44 yy; c 450 632 56 42 yy; c 360 552 12 20; k 372 558 60 16; g 281 576 122 104 yyyyyyt; b 281 576 124 105; c 409 590 20 12; s 228 600 14 66 3; s 237 628 32 56 3; c 405 603 30 22; c 405 636 32 16; c 414 664 18 12
s 237 690 62 16 2; s 234 710 32 56 3; c 294 720 54 42 yy; c 342 684 18 30; k 360 684 46 24; c 405 684 42 54 yy; s 351 720 40 20 3; c 354 744 50 22 gy; c 403 744 22 44 yg; c 354 770 50 20 yg; c 297 768 50 20 yy; k 264 735 32 84; c 366 800 20 14; s 427 765 18 28 2; c 300 803 18 14
s 156 720 12 84 4; c 168 742 14 20; s 156 803 24 62 5; m 90 757 62 100; o 120 807 6 b; s 255 837 230 20 19; n 249 870 210 52; s 471 864 14 74 4; n 495 858 112 66; c 510 843 38 12; c 570 840 20 12
o 625 856 13 y; o 625 895 13 y; o 625 934 13 y; o 667 895 13 g; s 240 930 42 14 2; c 378 933 34 18; s 414 933 66 14 3; s 528 930 40 14 2
k 567 435 110 40; k 561 475 200 200; c 720 444 52 24; c 769 438 60 42 yy; c 771 484 56 48 yy; c 678 450 18 50 yg; c 705 478 20 48 gg; c 730 470 20 48 gg; m 621 453 24 32; m 560 500 24 30; c 549 543 48 22 gy; c 546 570 48 20 yg; c 765 543 46 22 yy; c 774 567 70 40 yy; c 590 598 24 44 gy; c 640 540 20 46 yg; c 696 615 22 42 yg; c 756 608 22 50 gg; c 778 608 22 50 gg; c 765 662 20 12; s 690 650 58 24 6
s 666 710 62 18 3; s 657 733 20 22 2; c 783 748 18 14; d 682 804; c 729 790 12 20; c 765 790 14 20; o 736 853 10 y; o 736 855 6 b; o 775 850 13 y
`);

// right board, right half
draw(1240, 360, `
s 12 217 50 18 4; s 12 241 50 18 4; q 33 282 38 30 y r; c 0 270 14 30 yy; n 87 220 84 54; s 180 220 12 44 3; r 198 237 24 57 g; c 93 284 16 34; k 108 288 76 26; o 102 291 6 b; o 153 306 6 b; r 108 327 57 20 g
k 264 133 52 58; c 285 192 20 26; k 270 220 42 20; s 249 238 12 60 4; c 267 246 24 50 yy; s 300 246 12 60 4; k 243 300 70 36; o 293 312 6 b; o 306 306 6 b; g 328 120 24 26 yy; o 336 141 6 b; c 363 118 14 14
r 414 87 9 63 g; r 477 87 12 63 g; b 429 90 48 60; o 448 104 12 y; r 429 120 12 12 t; r 459 120 12 12 t; r 432 135 12 12 y; r 459 135 15 12 y; r 429 156 48 9 g
c 555 51 16 18; q 570 51 33 41 y b; c 525 90 34 14 gy; q 660 63 38 29 y l; q 708 118 32 38 y b; c 591 126 34 18; s 627 123 36 30 2; c 666 141 32 14; c 591 159 34 16; q 699 216 29 36 y b; c 738 231 14 32 yg; s 549 210 12 40 2; c 564 238 18 12
z w 564,209,598,174,635,209,598,244; z g 576,196,592,180,602,190,586,206; z y 605,200,613,192,622,200,614,208; z g 600,226,612,214,620,222,608,234; z y 580,218,588,212,596,220,588,228; z y 622,178,642,158,654,170,634,190; z n 630,176,642,165,648,171,636,182; z w 643,190,652,181,678,206,669,215; z t 655,192,660,188,668,196,662,201
c 57 381 28 14; c 87 387 46 20; c 126 372 18 12; c 156 376 14 18; s 177 375 74 20 6; k 87 405 115 50; c 42 411 42 50 yy; c -6 438 44 42 yy; c 210 414 48 30 yg; o 216 438 6 b; c -10 484 44 48 yy; c -10 540 46 24; c -10 567 60 40 yy; c -24 610 42 50 yy; c 21 608 46 56 yy; c 69 608 40 56 yy
s 54 472 18 90 4; g 75 465 126 116 yyyyyyt; b 75 465 126 116; k 207 456 44 122; c 180 585 48 44 yy; o 189 606 6 b; k 108 590 58 80; c 165 620 30 48; c 213 635 38 28 yg; c 235 588 14 30
r 201 696 57 24 g; s 66 708 38 26 3; c 130 708 22 28; c 3 748 16 12; c 228 744 56 40 yy; c 201 775 18 42; g 219 790 38 24 yyt; o 240 804 6 b; c 261 789 16 32
r 597 297 12 102 g; r 510 432 12 123 g; r 546 579 42 12 g; r 609 579 30 12 g; z g 515,570,525,561,540,573,530,584; k 528 558 24 20
k 348 271 112 22; s 348 291 18 68 3; k 366 294 20 88; g 387 297 70 84 yyyyg; b 387 297 72 84; o 420 336 6 b; s 462 330 18 48 4; k 462 270 76 54; k 482 325 18 60; m 500 327 72 64; r 516 339 40 39 g; m 540 274 56 36; k 576 315 18 84; k 612 273 40 130; k 363 384 130 18
k 303 440 38 130; k 345 438 110 32; s 465 447 34 20 3; m 342 474 152 86; r 360 489 114 57 g; o 417 516 6 b; k 525 438 42 70; g 568 444 56 60 yytg; b 566 442 60 62; o 597 477 6 b; k 632 446 22 60; m 528 510 36 34; k 567 510 84 66; m 627 512 24 26
k 333 565 172 36; c 297 583 26 42 gy; k 335 592 66 50; m 402 603 66 48; r 414 615 14 24 g; r 436 615 14 24 g; m 474 606 24 26; k 504 600 148 46; m 560 604 34 26; k 291 630 100 54; m 342 645 42 30; m 291 652 42 32; m 393 664 32 42; k 430 650 68 50; k 340 682 50 24
m 507 660 120 120; r 521 675 84 83 g; o 567 717 7 b; r 548 768 20 7 b; k 630 678 20 125; m 432 708 42 26; k 480 690 18 100; m 436 738 28 42; m 446 788 42 30; k 490 783 150 40; r 321 711 90 9 g; k 322 725 84 24; g 333 753 40 46 yyyg; o 340 790 6 b; o 352 784 7 b; r 411 753 12 48 g; k 381 745 28 80; c 321 810 20 12; c 345 810 18 12
h 675 531 54 50; h 672 720 54 50; h 645 837 54 50; m 693 645 28 26; s 675 630 12 60 4; c 708 597 20 28; s 711 668 20 50 4; s 681 777 18 46 3; s 711 777 22 24 2
n 234 858 311 68; s 288 837 242 20 20; s 264 927 222 20 18; c 228 927 22 18; c 213 870 14 28; o 240 894 6 b; r 531 885 12 15 g; o 110 856 10 y; o 157 853 13 y; o 193 853 13 y; o 205 925 13 y; o 151 925 13 g; o 685 922 13 t
`);
out.push('</g>');

ox = 440; oy = 360;
label(352, 694, 50, 'J1201');
label(667, 295, 9, 'J1506');
label(487, 367, 9, 'U300', -90);
ox = 700;
label(155, 595, 20, 'U800', -90);
label(438, 618, 22, 'U801', -90);
label(93, 786, 7, 'L615', -90);
ox = 980;
label(592, 146, 7, 'J103');
label(643, 382, 7, 'J104');
label(268, 447, 9, 'J1503');
label(460, 444, 9, 'J1504');
label(203, 565, 7, 'L613', -90);
label(343, 631, 9, 'U601');
label(124, 804, 8, 'J1139', -90);
label(353, 895, 8, 'J1100');
label(549, 891, 8, 'J603');
ox = 1240;
label(126, 245, 7, 'J1508');
label(600, 209, 7, 'J502');
label(137, 523, 9, 'U600');
label(417, 518, 12, 'U200');
label(568, 720, 10, 'S100', -90);
label(387, 893, 9, 'J1581');

for (const [x, y] of [[704, 296], [1154, 296], [704, 696], [1154, 696]]) {
  out.push(`<text class="mark" x="${x}" y="${y}" dy="6" text-anchor="middle" transform="rotate(-45 ${x} ${y})">XZZ@XZZHK</text>`);
}
document.getElementById('board').innerHTML = out.join('');
```
